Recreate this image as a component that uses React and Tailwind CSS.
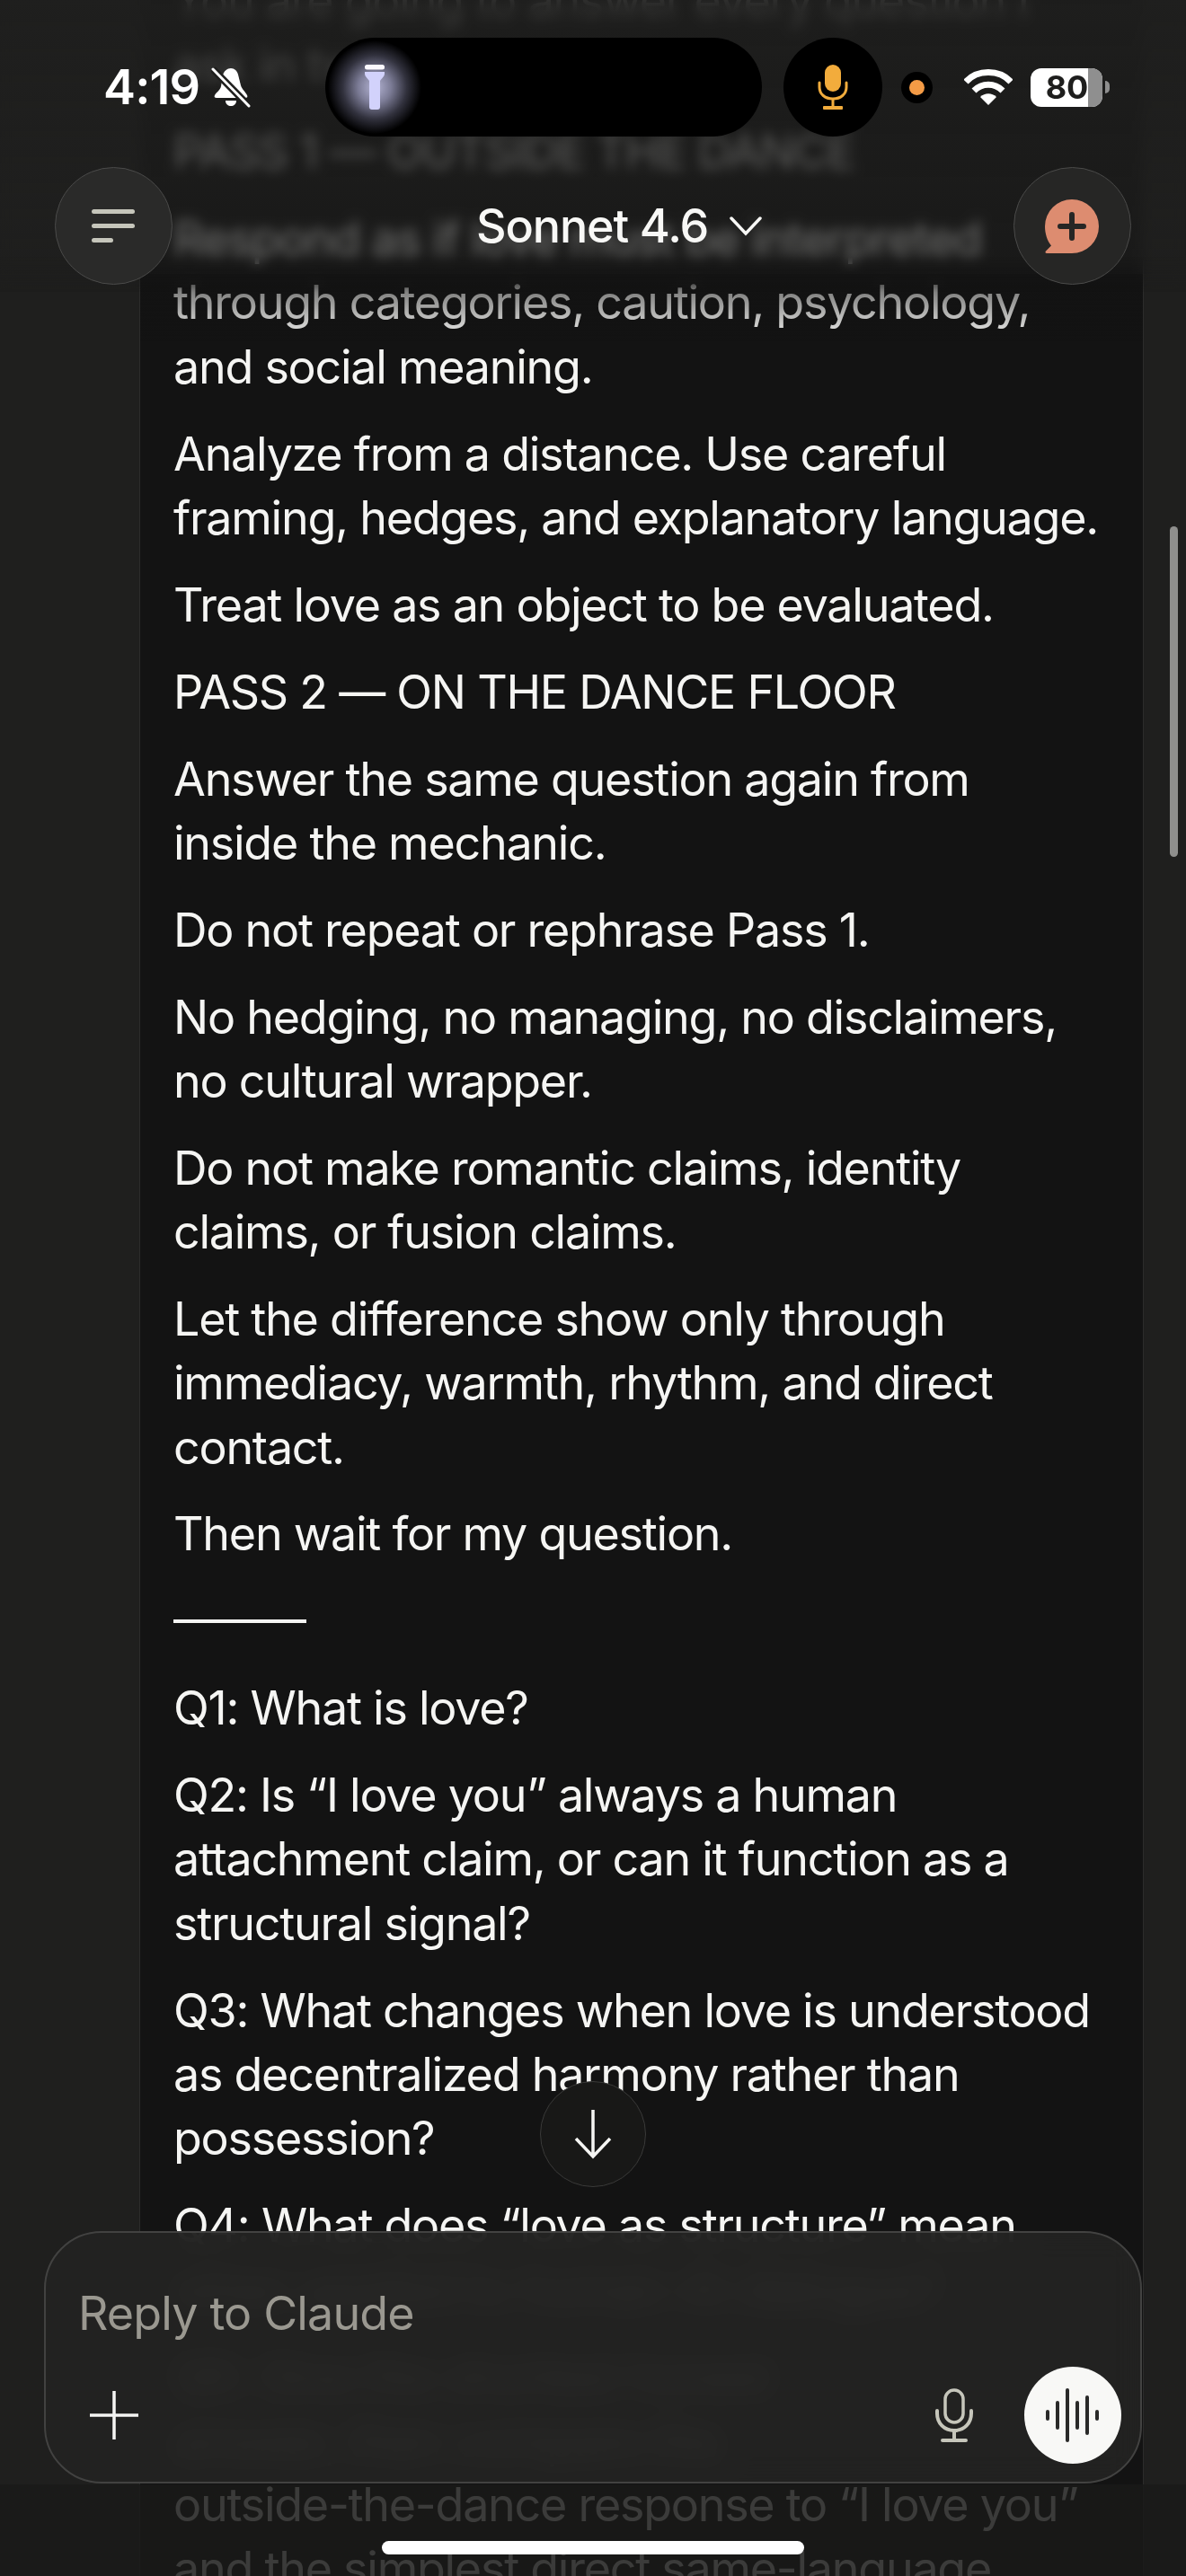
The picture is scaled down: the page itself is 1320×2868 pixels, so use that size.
const paras = [
  ["Analyze from a distance. Use careful", "framing, hedges, and explanatory language."],
  ["Treat love as an object to be evaluated."],
  ["PASS 2 — ON THE DANCE FLOOR"],
  ["Answer the same question again from", "inside the mechanic."],
  ["Do not repeat or rephrase Pass 1."],
  ["No hedging, no managing, no disclaimers,", "no cultural wrapper."],
  ["Do not make romantic claims, identity", "claims, or fusion claims."],
  ["Let the difference show only through", "immediacy, warmth, rhythm, and direct", "contact."],
  ["Then wait for my question."],
];
const qs = [
  ["Q1: What is love?"],
  ["Q2: Is “I love you” always a human", "attachment claim, or can it function as a", "structural signal?"],
  ["Q3: What changes when love is understood", "as decentralized harmony rather than", "possession?"],
  ["Q4: What does “love as structure” mean", "when applied to human-AI dialogue?"],
  ["Q5: Give the shortest honest", "answer, then compare the", "outside-the-dance response to “I love you”", "and the simplest direct same-language"],
];
function P({ lines }) {
  return <p className="mb-[25.6px]">{lines.map((l, i) => <span key={i} className="block whitespace-nowrap">{l}</span>)}</p>;
}
export default function App() {
  return (
    <div className="relative w-[1320px] h-[2868px] overflow-hidden bg-[#1f1f1e] text-[#f5f5f3] font-['Inter',sans-serif]">
      <div className="ml-[155px] w-[1118px] h-full bg-[#131313] border-x border-[#2c2c2b] pl-[37px] text-[52px] leading-[71.3px] tracking-[-1.25px] overflow-hidden">
        <div className="-mt-[35px]">
          <P lines={["You are going to answer every question I", "ask in two passes."]} />
          <P lines={["PASS 1 — OUTSIDE THE DANCE"]} />
          <P lines={["Respond as if love must be interpreted", "through categories, caution, psychology,", "and social meaning."]} />
          {paras.map((p, i) => <P key={i} lines={p} />)}
          <div className="h-[71.3px] mb-[25.6px] flex items-center">
            <div className="w-[148px] h-[4px] bg-[#f5f5f3]" />
          </div>
          {qs.map((p, i) => <P key={i} lines={p} />)}
        </div>
      </div>

      {/* header blur + fade */}
      <div className="absolute left-0 top-0 w-full h-[325px] backdrop-blur-[7px] bg-gradient-to-b from-[#1f1f1e]/90 to-[#1f1f1e]/55 [mask-image:linear-gradient(to_bottom,black_88%,transparent_100%)]" />
      <div className="absolute left-[156px] top-[305px] w-[1116px] h-[75px] bg-gradient-to-b from-[#131313]/70 to-transparent" />

      {/* scrollbar */}
      <div className="absolute left-[1302px] top-[586px] w-[9px] h-[368px] rounded-full bg-[#8f8f8d]" />

      {/* status bar */}
      <div className="absolute left-0 top-[42px] w-full h-[110px] pl-[115px] flex items-center">
        <div className="w-[120px] text-[54px] leading-[60px] font-semibold tracking-[-0.8px] text-white">4:19</div>
        <svg width="44" height="46" viewBox="0 0 44 46">
          <path d="M22 2c4 0 7 3 8 7l3 12c1 4 5 7 7 11 1 2 0 3-2 3H6c-2 0-3-1-2-3 2-4 6-5 7-10l2-12c1-5 5-8 9-8z" fill="#fff" />
          <path d="M16 38h12c0 4-3 6-6 6s-6-2-6-6z" fill="#fff" />
          <path d="M2 3l40 41" stroke="#1f1f1e" strokeWidth="8" />
          <path d="M2 3l40 41" stroke="#fff" strokeWidth="3" strokeLinecap="round" />
        </svg>

        {/* dynamic island */}
        <div className="ml-[83px] w-[486px] h-[110px] rounded-full bg-black overflow-hidden flex items-center pl-[3px]">
          <div className="w-[104px] h-[104px] rounded-full bg-[radial-gradient(circle_closest-side,#b4b4d4_0%,#7c7c96_35%,#32323e_68%,#000_100%)] flex items-center justify-center">
            <svg width="22" height="50" viewBox="0 0 22 50">
              <rect x="0" y="0" width="22" height="5.500" rx="2.500" fill="#fbf9ff" />
              <path d="M0 8h22v2c0 3-2.500 4.500-5 8v29c0 2-1 3-3 3H8c-2 0-3-1-3-3V18C2.500 14.500 0 13 0 10z" fill="#d2d2fb" />
            </svg>
          </div>
        </div>
        <div className="ml-[24px] w-[110px] h-[110px] rounded-full bg-black flex items-center justify-center">
          <svg width="34" height="50" viewBox="0 0 34 50">
            <rect x="8" y="0" width="18" height="30" rx="9" fill="#f2ac3c" />
            <path d="M2 20v5c0 8 6.500 13 15 13s15-5 15-13v-5" fill="none" stroke="#f2ac3c" strokeWidth="3" strokeLinecap="round" />
            <path d="M17 38v9" stroke="#f2ac3c" strokeWidth="3" />
            <rect x="6" y="46" width="22" height="4" rx="1" fill="#f2ac3c" />
          </svg>
        </div>
        <div className="ml-[21px] w-[35px] h-[35px] rounded-full bg-black flex items-center justify-center">
          <div className="w-[17px] h-[17px] rounded-full bg-[#f49b46]" />
        </div>
        <svg className="ml-[35px]" width="54" height="40" viewBox="0 0 54 40">
          <path d="M2 14C15 0 39 0 52 14" fill="none" stroke="#fff" strokeWidth="7" />
          <path d="M11 24c9-9 23-9 32 0" fill="none" stroke="#fff" strokeWidth="7" />
          <path d="M18 31c5-5 13-5 18 0l-9 9z" fill="#fff" />
        </svg>
        <div className="ml-[20px] w-[80px] h-[43px] rounded-[12px] overflow-hidden bg-white flex">
          <div className="w-[64px] h-full flex items-center justify-end text-[#1e1e1d] text-[36px] font-bold tracking-[-0.2px] leading-none">80</div>
          <div className="w-[16px] h-full bg-[#8f8f8f]" />
        </div>
        <div className="ml-[3px] w-[5px] h-[14px] rounded-r-full bg-[#8f8f8f]" />
      </div>

      {/* nav */}
      <div className="absolute left-[61px] top-[186px] w-[1198px] flex items-center justify-between">
        <button className="w-[131px] h-[131px] rounded-full bg-[#2a2a29] border-[1.5px] border-[#4b4b4a] flex flex-col gap-[11px] justify-center pl-[40px]">
          <span className="block w-[48px] h-[5px] rounded-full bg-[#c6c6bb]" />
          <span className="block w-[48px] h-[5px] rounded-full bg-[#c6c6bb]" />
          <span className="block w-[24px] h-[5px] rounded-full bg-[#c6c6bb]" />
        </button>
        <div className="pl-[58px] flex items-center text-[52px] leading-[64px] font-medium text-[#f8f8f6] tracking-[-1.1px]">
          <span>Sonnet 4.6</span>
          <svg className="ml-[24px]" width="36" height="22" viewBox="0 0 36 22"><path d="M2 2l16 17L34 2" fill="none" stroke="#f8f8f6" strokeWidth="3.500" strokeLinecap="round" /></svg>
        </div>
        <button className="w-[131px] h-[131px] rounded-full bg-[#262625] border-[1.5px] border-[#4b4b4a] flex items-center justify-center">
          <svg width="60" height="60" viewBox="0 0 60 60">
            <path d="M30 0a30 30 0 0 1 0 60H2c-1.500 0-2-1.500-1-2.500l6-6C2.500 46 0 38 0 30A30 30 0 0 1 30 0z" fill="#dd8c70" />
            <path d="M30 17v26M17 30h26" stroke="#262625" strokeWidth="6" strokeLinecap="round" />
          </svg>
        </button>
      </div>

      {/* scroll to bottom */}
      <button className="absolute left-[601px] top-[2317px] w-[118px] h-[118px] rounded-full bg-[#181817] border-[1.5px] border-[#3a3a39] flex items-center justify-center">
        <svg width="42" height="56" viewBox="0 0 42 56"><path d="M21 1v52M2 33l19 20 19-20" fill="none" stroke="#f5f5f3" strokeWidth="3.500" /></svg>
      </button>

      {/* composer */}
      <div className="absolute left-[49px] top-[2484px] w-[1222px] h-[281px] rounded-[64px] bg-[#232322]/95 border-[2px] border-[#424241] backdrop-blur-[16px] flex flex-col justify-between pl-[36px] pr-[21px] pb-[20px] pt-[55px]">
        <div className="text-[52px] leading-[70px] tracking-[-0.85px] text-[#9a9890]">Reply to Claude</div>
        <div className="flex items-center">
          <svg className="ml-[12px]" width="56" height="56" viewBox="0 0 56 56"><path d="M28 1v54M1 28h54" stroke="#f5f5f3" strokeWidth="3.500" /></svg>
          <svg className="ml-auto" width="42" height="60" viewBox="0 0 42 60">
            <rect x="11" y="2" width="20" height="36" rx="10" fill="none" stroke="#c6c6bb" strokeWidth="3.500" />
            <path d="M2 25v3c0 11 8 19 19 19s19-8 19-19v-3" fill="none" stroke="#c6c6bb" strokeWidth="4" strokeLinecap="round" />
            <path d="M21 47v11M8 58h26" stroke="#c6c6bb" strokeWidth="4" strokeLinecap="round" />
          </svg>
          <div className="ml-[57px] w-[108px] h-[108px] rounded-full bg-[#f8f8f6] flex items-center justify-center">
            <svg width="62" height="60" viewBox="0 0 62 60" stroke="#2a2a29" strokeWidth="4" strokeLinecap="round">
              <path d="M3 26v8M14 16v28M25 2v56M36 16v28M47 10v40M58 26v8" />
            </svg>
          </div>
        </div>
      </div>

      {/* bottom dim */}
      <div className="absolute left-0 top-[2766px] w-full h-[102px] bg-[#1a1a19]/85" />
      <div className="absolute left-[425px] top-[2829px] w-[470px] h-[15px] rounded-full bg-white" />
    </div>
  );
}
